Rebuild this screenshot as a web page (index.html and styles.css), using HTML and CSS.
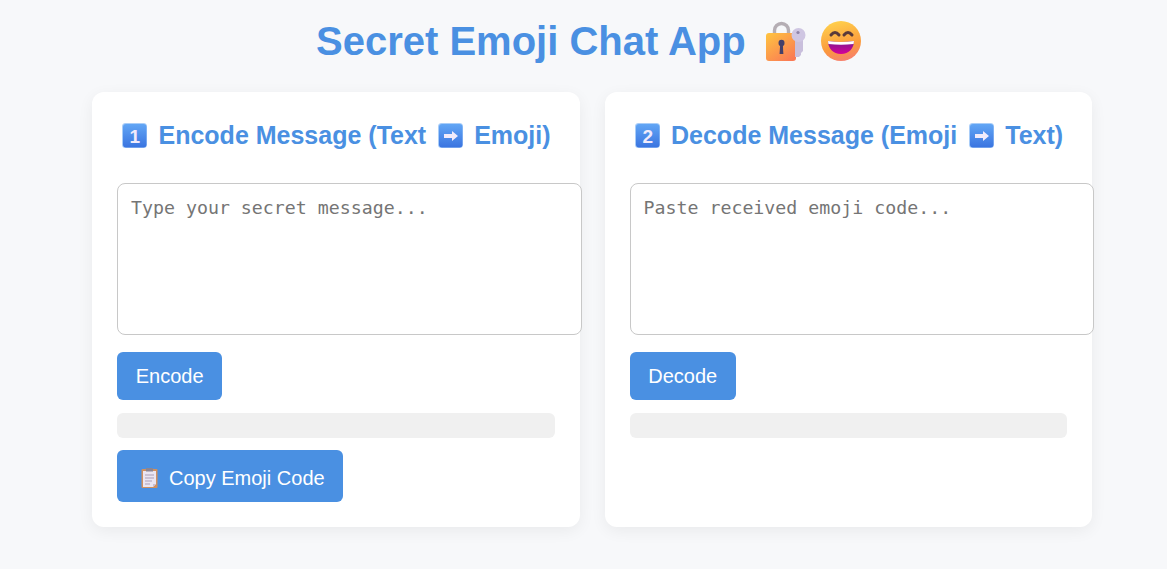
FILE: index.html
```html
<!DOCTYPE html>
<html lang="en">
  <head>
    <meta charset="UTF-8" />
    <meta name="viewport" content="width=device-width, initial-scale=1.0" />
    <title>Secret Emoji Chat App</title>
    <link rel="stylesheet" href="styles.css">
  </head>
  <body>
    <svg class="defs" width="0" height="0" aria-hidden="true">
      <defs>
        <linearGradient id="capFill" x1="0" y1="0" x2="0" y2="1">
          <stop offset="0" stop-color="#62a6f5" />
          <stop offset="1" stop-color="#3a74e0" />
        </linearGradient>
        <linearGradient id="lockFill" x1="0" y1="0" x2="0.8" y2="1">
          <stop offset="0" stop-color="#ffc53f" />
          <stop offset="1" stop-color="#fa7a55" />
        </linearGradient>
        <linearGradient id="faceFill" x1="0.35" y1="0" x2="0.6" y2="1">
          <stop offset="0" stop-color="#ffd04c" />
          <stop offset="0.65" stop-color="#fb9a3c" />
          <stop offset="1" stop-color="#f77f6e" />
        </linearGradient>
        <linearGradient id="mouthFill" x1="0" y1="0" x2="0" y2="1">
          <stop offset="0" stop-color="#7a1a8c" />
          <stop offset="1" stop-color="#d6009a" />
        </linearGradient>
        <symbol id="capBase" viewBox="0 0 25 25">
          <rect x="0" y="0" width="25" height="25" rx="3.5" fill="#a9cdf8" />
          <rect x="1" y="1" width="23.5" height="23.5" rx="3" fill="url(#capFill)" />
        </symbol>
      </defs>
    </svg>

    <h1 class="title">
      Secret Emoji Chat App
      <svg class="emoji-big lock" viewBox="0 0 40 40" role="img" aria-label="locked with key">
        <path d="M8.500 16V9.500a7 7 0 0 1 14 0V16" fill="none" stroke="#b5aeb4" stroke-width="3.400" />
        <rect x="0" y="12" width="30" height="28" rx="3" fill="url(#lockFill)" />
        <ellipse cx="15.500" cy="22" rx="3" ry="3.200" fill="#45406a" />
        <path d="M14.200 23h2.600l.6 10h-3.800z" fill="#45406a" />
        <path d="M29 16h8v14l-2 2v2l-2 2h-4z" fill="#c9bfdc" />
        <circle cx="32.500" cy="14" r="7" fill="#cfc6e2" />
        <circle cx="32" cy="11.500" r="1.600" fill="#8f84a8" />
      </svg>
      <svg class="emoji-big smile" viewBox="0 0 40 40" role="img" aria-label="grinning face">
        <circle cx="20" cy="20" r="20" fill="url(#faceFill)" />
        <path d="M10 14q4-5 8 0M23 14q4-5 8 0" fill="none" stroke="#5a3a3a" stroke-width="3" stroke-linecap="round" />
        <path d="M7 20q13 2 26 0c0 7-5 13-13 13s-13-6-13-13z" fill="url(#mouthFill)" />
        <path d="M7 20q13 2 26 0l-.4 3q-12.600 1.500-25.200 0z" fill="#fff" />
      </svg>
    </h1>

    <main class="panels">
      <section class="card">
        <h2 class="card-title">
          <svg class="keycap" viewBox="0 0 25 25" role="img" aria-label="keycap 1">
            <use href="#capBase" />
            <text class="keycap-digit" x="12.700" y="19.500">1</text>
          </svg>
          Encode Message (Text
          <svg class="keycap" viewBox="0 0 25 25" role="img" aria-label="right arrow">
            <use href="#capBase" />
            <path d="M6 11h8V8l6 5-6 5v-3H6z" fill="#f1ebfb" />
          </svg>
          Emoji)
        </h2>
        <textarea class="field" placeholder="Type your secret message..."></textarea>
        <div><button class="btn">Encode</button></div>
        <div class="result"></div>
        <div>
          <button class="btn btn-copy">
            <svg class="clip" viewBox="0 0 17 20" role="img" aria-label="clipboard">
              <rect x="0.500" y="1" width="16" height="19" rx="1" fill="#d0905f" />
              <path d="M2 3h13v13l-3 3H2z" fill="#ebe6f2" />
              <path d="M12 19l3-3h-3z" fill="#c9bfd6" />
              <rect x="5" y="0" width="7" height="3.500" fill="#8b8593" />
              <path d="M4 7h9M4 10h9M4 13h7M4 16h5" stroke="#ab9fb8" stroke-width="1" />
            </svg>
            Copy Emoji Code
          </button>
        </div>
      </section>

      <section class="card">
        <h2 class="card-title">
          <svg class="keycap" viewBox="0 0 25 25" role="img" aria-label="keycap 2">
            <use href="#capBase" />
            <text class="keycap-digit" x="12.700" y="19.500">2</text>
          </svg>
          Decode Message (Emoji
          <svg class="keycap" viewBox="0 0 25 25" role="img" aria-label="right arrow">
            <use href="#capBase" />
            <path d="M6 11h8V8l6 5-6 5v-3H6z" fill="#f1ebfb" />
          </svg>
          Text)
        </h2>
        <textarea class="field" placeholder="Paste received emoji code..."></textarea>
        <div><button class="btn">Decode</button></div>
        <div class="result"></div>
      </section>
    </main>
  </body>
</html>
```

FILE: styles.css
```css
html,
body {
  margin: 0;
  padding: 0;
  overflow: hidden;
}

body {
  height: 569px;
  padding-left: 17px;
  box-sizing: border-box;
  font-family: "Liberation Sans", Arial, sans-serif;
  background-color: #f7f8fa;
}

.defs {
  display: block;
  height: 0;
}

.title {
  height: 74px;
  margin: 0;
  padding: 18px 7px 0 0;
  box-sizing: border-box;
  font-size: 40px;
  line-height: 46px;
  font-weight: 700;
  color: #4a90e2;
  text-align: center;
}

.emoji-big {
  width: 40px;
  height: 40px;
  vertical-align: -6px;
}

.lock {
  margin-left: 9px;
}

.smile {
  margin-left: 4px;
}

.panels {
  display: grid;
  grid-template-columns: 1fr 1fr;
  gap: 25px;
  width: 1000px;
  margin: 18px auto 0;
}

.card {
  height: 435px;
  padding: 25px;
  box-sizing: border-box;
  background: #ffffff;
  border-radius: 12px;
  box-shadow: 0 4px 16px rgba(0, 0, 0, 0.06);
}

.card-title {
  display: flex;
  align-items: center;
  gap: 11.5px;
  height: 36px;
  margin: 0 0 30px 5px;
  font-size: 25px;
  line-height: 36px;
  font-weight: 700;
  color: #4a90e2;
  white-space: nowrap;
}

.keycap {
  flex: none;
  width: 25px;
  height: 25px;
}

.keycap-digit {
  font-family: "Liberation Sans", Arial, sans-serif;
  font-size: 19px;
  font-weight: 700;
  fill: #f1ebfb;
  text-anchor: middle;
}

.field {
  display: block;
  width: 100%;
  height: 124px;
  padding: 13px 12px 13px 13px;
  border: 1px solid #c8c8c8;
  border-radius: 8px;
  box-sizing: content-box;
  margin: 0 0 17px;
  font-family: "DejaVu Sans Mono", monospace;
  font-size: 18.25px;
  line-height: 22px;
  background: #ffffff;
  resize: none;
  outline: none;
}

.field::placeholder {
  color: #757575;
}

.btn {
  display: inline-flex;
  align-items: center;
  gap: 11px;
  height: 48px;
  padding: 0 18.75px;
  border: none;
  border-radius: 6px;
  background-color: #4a90e2;
  color: #ffffff;
  font-family: inherit;
  font-size: 20px;
  cursor: pointer;
}

.btn-copy {
  height: 52px;
  padding: 4px 18px 0 24px;
}

.clip {
  width: 17px;
  height: 20px;
}

.result {
  height: 25px;
  margin: 13px 0 12px;
  background: #f0f0f0;
  border-radius: 6px;
}
```
